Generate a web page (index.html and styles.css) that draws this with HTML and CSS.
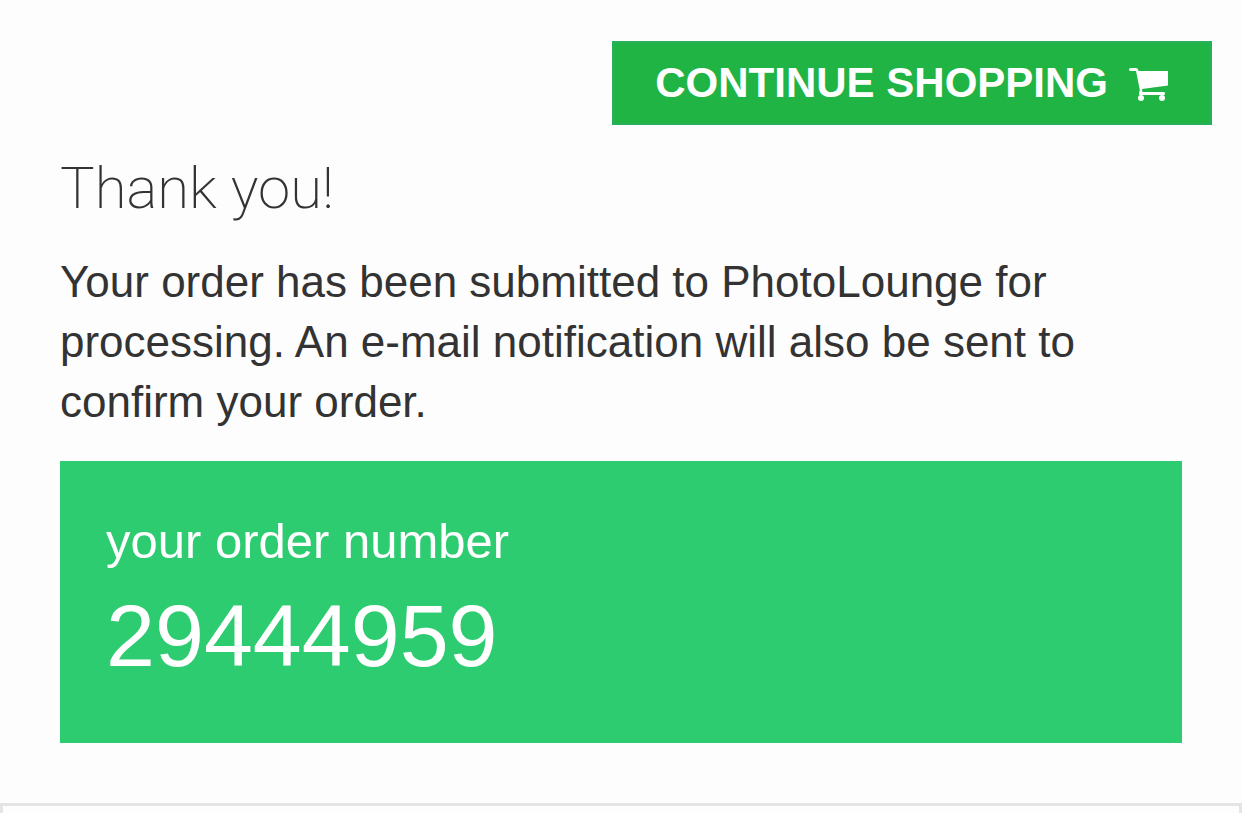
FILE: index.html
```html
<!DOCTYPE html>
<html lang="en">
<head>
<meta charset="utf-8">
<meta name="viewport" content="width=device-width, initial-scale=1">
<title>Order confirmation</title>
<link rel="stylesheet" href="styles.css">
</head>
<body>
<main class="confirmation">
  <div class="actions">
    <button class="continue" type="button">
      <span>CONTINUE SHOPPING</span>
      <svg class="cart" viewBox="0 0 40 36" aria-hidden="true">
        <path d="M1.500 3H7q1.500 0 2 1.500L9.500 6H39v14.500L13 24l.5 3H35q1 0 1 1.500T35 30H11q-1.500 0-1-2l.8-3L7 6H1.500Q0 6 0 4.500T1.500 3z" fill="currentColor"/>
        <circle cx="12" cy="33" r="3" fill="currentColor"/>
        <circle cx="33" cy="33" r="3" fill="currentColor"/>
      </svg>
    </button>
  </div>
  <section class="message">
    <h1 class="title">Thank you!</h1>
    <p class="text">Your order has been submitted to PhotoLounge for processing. An e-mail notification will also be sent to confirm your order.</p>
    <div class="order">
      <p class="order-label">your order number</p>
      <p class="order-number">29444959</p>
    </div>
  </section>
</main>
<div class="panel"></div>
</body>
</html>
```
FILE: styles.css
```css
* { box-sizing: border-box; }
body {
  margin: 0;
  min-height: 100vh;
  display: flex;
  flex-direction: column;
  background: #fdfdfd;
  color: #333;
  font-family: "Liberation Sans", Arial, sans-serif;
}
.confirmation { padding: 41px 30px 60px; }
.actions { display: flex; justify-content: flex-end; }
.continue {
  display: flex;
  align-items: center;
  gap: 21px;
  padding: 16px 41px;
  border: 2px solid #27b05a;
  background: #1fb443;
  color: #fff;
  font: bold 42px/48px "Liberation Sans", Arial, sans-serif;
}
.cart { width: 40px; height: 36px; }
.message { padding: 0 30px; }
.title {
  margin: 31px 0 32px;
  font-family: Roboto, sans-serif;
  font-size: 58px;
  font-weight: 200;
  line-height: 64px;
}
.text { margin: 0 0 29px; font-size: 44px; line-height: 60px; }
.order {
  padding: 49px 46px 43px;
  background: #2ecc71;
  color: #fff;
}
.order-label { margin: 0; font-size: 49px; line-height: 62px; }
.order-number { margin: 0; font-size: 88px; line-height: 128px; }
.panel {
  flex: 1;
  min-height: 10px;
  border: 3px solid #e4e4e4;
  border-bottom: 0;
}
```
